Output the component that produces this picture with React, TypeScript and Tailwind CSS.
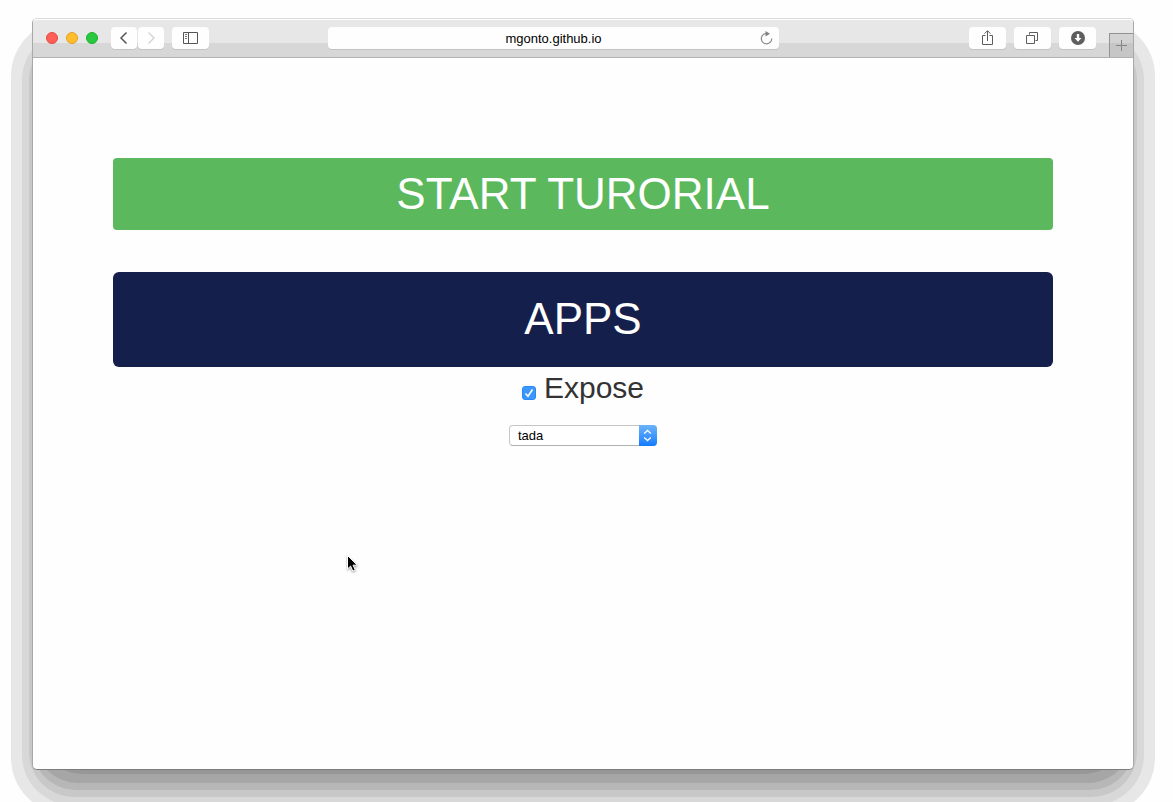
import type { ReactNode } from "react";

function WindowShadow() {
  return (
    <div aria-hidden="true" className="pointer-events-none absolute inset-0 -z-10">
      <div className="absolute top-[20px] right-[18px] bottom-[-12px] left-[11px] rounded-[56px] bg-[#e7e7e7]" />
      <div className="absolute top-[30px] right-[29px] bottom-[-3px] left-[22px] rounded-[50px] bg-[#d8d8d8]" />
      <div className="absolute top-[35px] right-[36px] bottom-[5px] left-[29px] rounded-[45px] bg-[#c8c8c8]" />
      <div className="absolute top-[40px] right-[39px] bottom-[12px] left-[32px] rounded-[44px] bg-[#b7b7b7]" />
      <div className="absolute top-[40px] right-[40px] bottom-[19px] left-[33px] rounded-[46px] bg-[#a6a6a6]" />
      <div className="absolute top-[40px] right-[41px] bottom-[28px] left-[34px] rounded-[50px] bg-[#979797]" />
    </div>
  );
}

function ToolButton({ label, className, children }: { label: string; className: string; children: ReactNode }) {
  return (
    <button
      type="button"
      aria-label={label}
      className={`flex h-[22px] shrink-0 items-center justify-center rounded bg-[#fefefe] shadow-[0_1px_0_#c4c4c4] ${className}`}
    >
      {children}
    </button>
  );
}

function Toolbar() {
  return (
    <header className="flex h-[39px] shrink-0 items-start rounded-t border-t border-b border-t-white border-b-[#b1b1b1] bg-[linear-gradient(#e7e7e7_23px,#d7d7d7_23px)]">
      <div className="flex shrink-0 items-center pt-[7px] pl-[13px]">
        <div className="mr-[13px] flex gap-2">
          <button type="button" aria-label="Close" className="size-3 rounded-full border border-[#e24b41] bg-[#ff5f57]" />
          <button type="button" aria-label="Minimize" className="size-3 rounded-full border border-[#e1a325] bg-[#ffbd2e]" />
          <button type="button" aria-label="Zoom" className="size-3 rounded-full border border-[#1daf2c] bg-[#28c940]" />
        </div>
        <div className="mr-2 flex gap-px">
          <ToolButton label="Back" className="w-[26px]">
            <svg width="12" height="14" viewBox="0 0 12 14" fill="none" stroke="#555" strokeWidth="1.5">
              <path d="M8.5 1.5 3 7l5.500 5.500" />
            </svg>
          </ToolButton>
          <ToolButton label="Forward" className="w-[26px]">
            <svg width="12" height="14" viewBox="0 0 12 14" fill="none" stroke="#d2d2d2" strokeWidth="1.300">
              <path d="M3.500 1.500 9 7l-5.500 5.500" />
            </svg>
          </ToolButton>
        </div>
        <ToolButton label="Show sidebar" className="w-[37px]">
          <svg width="15" height="12" viewBox="0 0 15 12" fill="none" stroke="#555">
            <path d="M.5.5h14v11H.5zM5.500.5v11" />
            <path d="M2 2.500h2M2 4.500h2M2 6.500h2" stroke="#777" />
          </svg>
        </ToolButton>
      </div>

      <div className="flex-[119]" />
      <div className="relative mt-[7px] w-[41%]">
        <input
          type="text"
          aria-label="Address"
          defaultValue="mgonto.github.io"
          className="block h-[22px] w-full rounded bg-[#fefefe] px-6 pt-px text-center text-[13px] text-black shadow-[0_1px_0_#c4c4c4] outline-none"
        />
        <button type="button" aria-label="Reload" className="absolute top-1 right-[6px]">
          <svg width="13" height="14" viewBox="0 0 13 14" fill="none">
            <path d="M6 2.500A5.200 5.200 0 1 0 11.700 7.500" stroke="#8a8a8a" strokeWidth="1.200" />
            <path d="M5.500 0 10 2.700 5.500 5.400z" fill="#808080" />
          </svg>
        </button>
      </div>
      <div className="flex-[190]" />

      <div className="flex shrink-0 gap-2 pt-[7px]">
        <ToolButton label="Share" className="w-[37px]">
          <svg width="11" height="16" viewBox="0 0 11 16" fill="none" stroke="#5c5c5c">
            <path d="M3.500 5.500h-3v9h10v-9h-3M5.500 11V1M2.500 3.700l3-3 3 3" />
          </svg>
        </ToolButton>
        <ToolButton label="Show all tabs" className="w-[37px]">
          <svg width="13" height="13" viewBox="0 0 13 13" fill="none" stroke="#5c5c5c">
            <path d="M.5 3.500h8v8h-8zM3.500 2.500v-2h8v8h-2" />
          </svg>
        </ToolButton>
        <ToolButton label="Downloads" className="w-[37px]">
          <svg width="14" height="14" viewBox="0 0 14 14">
            <circle cx="7" cy="7" r="7" fill="#5e5e5e" />
            <path d="M5.800 3h2.400v4h2.300L7 10.800 3.500 7h2.300z" fill="#fff" />
          </svg>
        </ToolButton>
      </div>
      <button
        type="button"
        aria-label="New tab"
        className="mt-[13px] ml-[13px] flex h-6 w-6 shrink-0 items-center justify-center border-t border-l border-[#929292] bg-[linear-gradient(#d3d3d3_9px,#c6c6c6_9px)]"
      >
        <svg width="11" height="11" viewBox="0 0 11 11" stroke="#858585">
          <path d="M5.500 0v11M0 5.500h11" />
        </svg>
      </button>
    </header>
  );
}

function MousePointer() {
  return (
    <svg aria-hidden="true" className="absolute top-[554px] left-[346px]" width="13" height="20" viewBox="0 0 13 20">
      <path
        d="M1.500 1.500v13.500l3.100-2.900 2.200 5 2.500-1.100-2.200-4.800h4.200z"
        fill="#000"
        stroke="#fff"
        strokeWidth="1"
        className="drop-shadow-[0_1px_1px_rgba(0,0,0,0.4)]"
      />
    </svg>
  );
}

export default function App() {
  return (
    <div className="relative isolate flex min-h-screen flex-col overflow-hidden bg-[#fefefe] pt-[18px] pr-[39px] pb-8 pl-8 font-['Liberation_Sans',Arial,sans-serif]">
      <WindowShadow />
      <div className="flex flex-1 flex-col rounded-[5px] border border-t-[#d9d9d9] border-r-[#a8a8a8] border-b-[#7c7c7c] border-l-[#a8a8a8] bg-[#fefefe]">
        <Toolbar />
        <main className="flex flex-1 flex-col px-20 pt-[100px]">
          <button type="button" className="h-[72px] rounded bg-[#5cb85c] pb-px text-[44px] leading-none text-white">
            START TURORIAL
          </button>
          <button type="button" className="mt-[42px] h-[95px] rounded-md bg-[#151f4b] pb-px text-[44px] leading-none text-white">
            APPS
          </button>
          <label className="flex h-10 items-center justify-center gap-2 text-[30px] text-[#333]">
            <span className="relative mt-3 flex size-[14px]">
              <input
                type="checkbox"
                defaultChecked
                className="peer size-[14px] appearance-none rounded-[3px] border border-[#bbb] bg-white checked:border-[#2b88f5] checked:bg-[#3b97fc]"
              />
              <svg
                aria-hidden="true"
                className="pointer-events-none absolute inset-0 hidden peer-checked:block"
                width="14"
                height="14"
                viewBox="0 0 14 14"
                fill="none"
                stroke="#fff"
                strokeWidth="1.600"
              >
                <path d="M3.500 7.500 6 10.200 10.500 3.500" />
              </svg>
            </span>
            Expose
          </label>
          <div className="relative mx-auto mt-[18px] w-[148px]">
            <select
              aria-label="Animation"
              className="block h-[21px] w-full appearance-none rounded border border-[#c6c6c6] border-b-[#b0b0b0] bg-white pr-5 pl-2 text-[13px] leading-4 text-black"
            >
              <option>tada</option>
            </select>
            <span
              aria-hidden="true"
              className="pointer-events-none absolute inset-y-0 right-0 flex w-[18px] items-center justify-center rounded-r bg-linear-to-b from-[#6bb3fa] to-[#0b7bff]"
            >
              <svg width="10" height="13" viewBox="0 0 10 13" fill="none" stroke="#fff" strokeWidth="1.300">
                <path d="M1.200 4.500 4.500 1.500l3.300 3M1.200 8.500l3.300 3 3.300-3" />
              </svg>
            </span>
          </div>
        </main>
      </div>
      <MousePointer />
    </div>
  );
}
